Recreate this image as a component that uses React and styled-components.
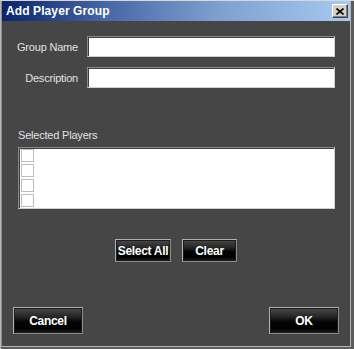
import React from 'react';
import styled, { createGlobalStyle } from 'styled-components';

const GlobalStyle = createGlobalStyle`
  html, body {
    margin: 0;
    padding: 0;
    background: #ffffff;
  }
  * {
    box-sizing: border-box;
  }
`;

const UI_FONT = `"Liberation Sans", Arial, sans-serif`;

function App() {
  const players = [1, 2, 3, 4];

  return (
    <>
      <GlobalStyle />
      <Window>
        <Frame>
          <TitleBar>
            <Title>Add Player Group</Title>
            <CloseBtn aria-label="close">
              <svg width="8" height="7" viewBox="0 0 8 7">
                <path d="M0.5 0.5 L7.5 6.5 M7.5 0.5 L0.5 6.5" stroke="#000" strokeWidth="1.6" fill="none" />
              </svg>
            </CloseBtn>
          </TitleBar>
          <Body>
            <Form>
              <Label>Group Name</Label>
              <TextInput />
              <Label>Description</Label>
              <TextInput />
            </Form>
            <Section>
              <SectionLabel>Selected Players</SectionLabel>
              <PlayerList>
                {players.map(p => (
                  <Check key={p} />
                ))}
              </PlayerList>
            </Section>
            <ActionRow>
              <DarkButton w={56} h={23}>Select All</DarkButton>
              <DarkButton w={55} h={23}>Clear</DarkButton>
            </ActionRow>
            <Footer>
              <DarkButton w={70} h={27}>Cancel</DarkButton>
              <DarkButton w={70} h={27}>OK</DarkButton>
            </Footer>
          </Body>
        </Frame>
      </Window>
    </>
  );
}

export default App;

const Window = styled.div`
  width: 354px;
  height: 349px;
  background: #5c5c5c;
  border-top: 1px solid #d8d8d8;
  border-left: 1px solid #b8b8b8;
  padding: 0 3px 2px 0;
  display: flex;
`;

const Frame = styled.div`
  flex: 1;
  display: flex;
  flex-direction: column;
  border-left: 1px solid #8c8c8c;
  border-right: 1px solid #b4b4b4;
  border-bottom: 1px solid #b4b4b4;
`;

const TitleBar = styled.div`
  height: 20px;
  display: flex;
  align-items: center;
  justify-content: space-between;
  padding: 0 2px 0 4px;
  background: linear-gradient(to right, #0a246a 0%, #4767a6 30%, #7f9fd0 62%, #a6caf0 100%);
`;

const Title = styled.span`
  font-family: ${UI_FONT};
  font-weight: bold;
  font-size: 12px;
  color: #ffffff;
  letter-spacing: 0.1px;
`;

const CloseBtn = styled.div`
  width: 16px;
  height: 14px;
  display: flex;
  align-items: center;
  justify-content: center;
  background: #d4d0c8;
  border-top: 1px solid #ffffff;
  border-left: 1px solid #ffffff;
  border-right: 1px solid #404040;
  border-bottom: 1px solid #404040;
  box-shadow: inset -1px -1px 0 #808080;
`;

const Body = styled.div`
  flex: 1;
  background: #464646;
  display: flex;
  flex-direction: column;
  padding-top: 15px;
`;

const Form = styled.div`
  display: grid;
  grid-template-columns: 62px 1fr;
  column-gap: 9px;
  row-gap: 10px;
  align-items: center;
  padding: 0 15px 0 14px;
`;

const Label = styled.span`
  font-family: ${UI_FONT};
  font-size: 11px;
  color: #e2e2e2;
  text-align: right;
  white-space: nowrap;
  letter-spacing: -0.2px;
`;

const TextInput = styled.div`
  height: 21px;
  background: #ffffff;
  border-top: 1px solid #8a8a8a;
  border-left: 1px solid #8a8a8a;
  border-right: 1px solid #d4d0c8;
  border-bottom: 1px solid #d4d0c8;
  box-shadow: inset 1px 1px 0 #404040;
`;

const Section = styled.div`
  display: flex;
  flex-direction: column;
  padding: 0 15px 0 16px;
  margin-top: 41px;
`;

const SectionLabel = styled.span`
  font-family: ${UI_FONT};
  font-size: 11px;
  color: #e2e2e2;
  letter-spacing: -0.2px;
  line-height: 13px;
  margin-bottom: 5px;
`;

const PlayerList = styled.div`
  height: 62px;
  background: #ffffff;
  display: flex;
  flex-direction: column;
  gap: 2px;
  padding: 1px 0 0 2px;
  border-top: 1px solid #8a8a8a;
  border-left: 1px solid #8a8a8a;
  border-right: 1px solid #d4d0c8;
  border-bottom: 1px solid #d4d0c8;
  box-shadow: inset 1px 1px 0 #404040;
`;

const Check = styled.div`
  width: 13px;
  height: 13px;
  border: 1px solid #bdbdbd;
  background: #ffffff;
`;

const ActionRow = styled.div`
  display: flex;
  justify-content: center;
  gap: 11px;
  margin-top: 30px;
`;

const DarkButton = styled.div`
  width: ${({ w }) => w}px;
  height: ${({ h }) => h}px;
  display: flex;
  align-items: center;
  justify-content: center;
  font-family: ${UI_FONT};
  font-weight: bold;
  font-size: 12px;
  letter-spacing: -0.3px;
  color: #ffffff;
  background: linear-gradient(to bottom, #4a4a4a 0%, #262626 35%, #050505 55%, #000000 80%, #1a1a1a 100%);
  border: 1px solid #b0b0b0;
  border-right-color: #8c8c8c;
  border-bottom-color: #8c8c8c;
  box-shadow: inset 0 0 0 1px #1c1c1c;
`;

const Footer = styled.div`
  display: flex;
  justify-content: space-between;
  margin-top: 45px;
  padding: 0 11px 0 11px;
`;
